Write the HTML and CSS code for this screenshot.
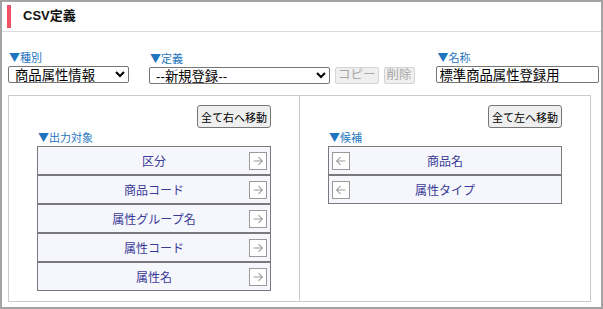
FILE: index.html
```html
<!DOCTYPE html>
<html lang="ja">
<head>
    <meta charset="UTF-8">
    <title>CSV定義</title>
    <link rel="stylesheet" href="styles.css">
</head>
<body>
    <div class="frame">
        <header class="page-head">
            <h1>CSV定義</h1>
        </header>
        <div class="form-row">
            <div class="field field-kind">
                <label>▼種別</label>
                <select class="sel-kind">
                    <option>商品属性情報</option>
                </select>
            </div>
            <div class="field field-def">
                <label>▼定義</label>
                <div class="def-controls">
                    <select class="sel-def">
                        <option>--新規登録--</option>
                    </select>
                    <button class="btn-small" disabled>コピー</button>
                    <button class="btn-small" disabled>削除</button>
                </div>
            </div>
            <div class="field field-name">
                <label>▼名称</label>
                <input type="text" class="name-input" value="標準商品属性登録用">
            </div>
        </div>
        <div class="columns">
            <section class="panel">
                <div class="panel-top"><button class="btn-move">全て右へ移動</button></div>
                <div class="panel-label">▼出力対象</div>
                <ul class="items">
                    <li class="item"><span></span><span class="item-name">区分</span><span class="arrow"><svg viewBox="0 0 16 16"><path d="M3 8h10M8.5 3.5L13 8l-4.5 4.5"/></svg></span></li>
                    <li class="item"><span></span><span class="item-name">商品コード</span><span class="arrow"><svg viewBox="0 0 16 16"><path d="M3 8h10M8.5 3.5L13 8l-4.5 4.5"/></svg></span></li>
                    <li class="item"><span></span><span class="item-name">属性グループ名</span><span class="arrow"><svg viewBox="0 0 16 16"><path d="M3 8h10M8.5 3.5L13 8l-4.5 4.5"/></svg></span></li>
                    <li class="item"><span></span><span class="item-name">属性コード</span><span class="arrow"><svg viewBox="0 0 16 16"><path d="M3 8h10M8.5 3.5L13 8l-4.5 4.5"/></svg></span></li>
                    <li class="item"><span></span><span class="item-name">属性名</span><span class="arrow"><svg viewBox="0 0 16 16"><path d="M3 8h10M8.5 3.5L13 8l-4.5 4.5"/></svg></span></li>
                </ul>
            </section>
            <section class="panel">
                <div class="panel-top"><button class="btn-move">全て左へ移動</button></div>
                <div class="panel-label">▼候補</div>
                <ul class="items">
                    <li class="item left"><span class="arrow"><svg viewBox="0 0 16 16"><path d="M13 8H3M7.5 3.5L3 8l4.5 4.5"/></svg></span><span class="item-name">商品名</span><span></span></li>
                    <li class="item left"><span class="arrow"><svg viewBox="0 0 16 16"><path d="M13 8H3M7.5 3.5L3 8l4.5 4.5"/></svg></span><span class="item-name">属性タイプ</span><span></span></li>
                </ul>
            </section>
        </div>
    </div>
</body>
</html>
```

FILE: styles.css
```css
body {
    margin: 0;
    font-family: "Liberation Sans", "Noto Sans CJK JP", sans-serif;
    background: #fff;
}
.frame {
    width: 603px;
    height: 309px;
    box-sizing: border-box;
    border: 2px solid #a3a3a3;
}
.page-head {
    height: 30px;
    border-bottom: 1px solid #dcdcdc;
    padding: 3px 0 0 5px;
    box-sizing: border-box;
}
.page-head h1 {
    margin: 0;
    height: 23px;
    border-left: 4px solid #ef5166;
    padding-left: 12px;
    font-size: 13px;
    font-weight: bold;
    line-height: 21px;
    color: #111;
}
.form-row {
    display: flex;
    align-items: flex-end;
    padding: 18px 0 0 6px;
}
.field label {
    display: block;
    font-family: "Noto Sans CJK JP", sans-serif;
    font-size: 11px;
    line-height: 14px;
    color: #1e75bd;
    padding-left: 1px;
    margin-bottom: 2px;
}
.field-def {
    margin-left: 20px;
}
.field-name {
    margin-left: 21px;
}
.field-name label {
    padding-left: 2px;
}
.def-controls {
    display: flex;
    gap: 5px;
}
select, .name-input {
    font-family: "Liberation Sans", "Noto Sans CJK JP", sans-serif;
    font-size: 13.33px;
    height: 17px;
    box-sizing: border-box;
    border: 1px solid #767676;
    border-radius: 2px;
    padding: 0 2px;
    margin: 0;
    background: #fff;
    color: #000;
}
.sel-kind {
    width: 121px;
}
.sel-def {
    width: 181px;
}
.name-input {
    width: 163px;
    padding: 0 3px;
    line-height: 15px;
}
.btn-small {
    height: 17px;
    padding: 0 2px;
    margin: 0;
    font-family: "Liberation Sans", "Noto Sans CJK JP", sans-serif;
    font-size: 12.5px;
    line-height: 15px;
    border: 1px solid #d4d4d4;
    border-radius: 2px;
    background: #efefef;
    color: #a8a8a8;
}
.columns {
    display: flex;
    margin: 11px 0 0 6px;
    width: 583px;
    height: 207px;
    box-sizing: border-box;
    border: 1px solid #cbcbcb;
}
.panel {
    flex: 1;
    padding: 9px 28px 0 28px;
}
.panel + .panel {
    border-left: 1px solid #cbcbcb;
}
.panel-top {
    display: flex;
    justify-content: flex-end;
}
.btn-move {
    height: 23px;
    padding: 0 3px;
    font-family: "Liberation Sans", "Noto Sans CJK JP", sans-serif;
    font-size: 11px;
    color: #000;
    background: #efefef;
    border: 1px solid #767676;
    border-radius: 3px;
}
.panel-label {
    font-family: "Noto Sans CJK JP", sans-serif;
    font-size: 11px;
    line-height: 18px;
    color: #1e75bd;
    padding-left: 1px;
}
.items {
    list-style: none;
    margin: 0;
    padding: 0;
}
.item {
    display: grid;
    grid-template-columns: 22px 1fr 22px;
    align-items: center;
    height: 29px;
    box-sizing: border-box;
    border: 1px solid #7a7a7e;
    background: #f5f7fd;
}
.item-name {
    text-align: center;
    font-size: 12px;
    color: #3a3a96;
}
.arrow {
    width: 18px;
    height: 18px;
    box-sizing: border-box;
    border: 1px solid #9a9a9a;
    background: #fff;
    display: flex;
    align-items: center;
    justify-content: center;
}
.item .arrow {
    justify-self: end;
    margin-right: 3px;
}
.item.left .arrow {
    justify-self: start;
    margin-left: 3px;
    margin-right: 0;
}
.arrow svg {
    width: 14px;
    height: 14px;
    fill: none;
    stroke: #9a9a9a;
    stroke-width: 1.2;
}
```
